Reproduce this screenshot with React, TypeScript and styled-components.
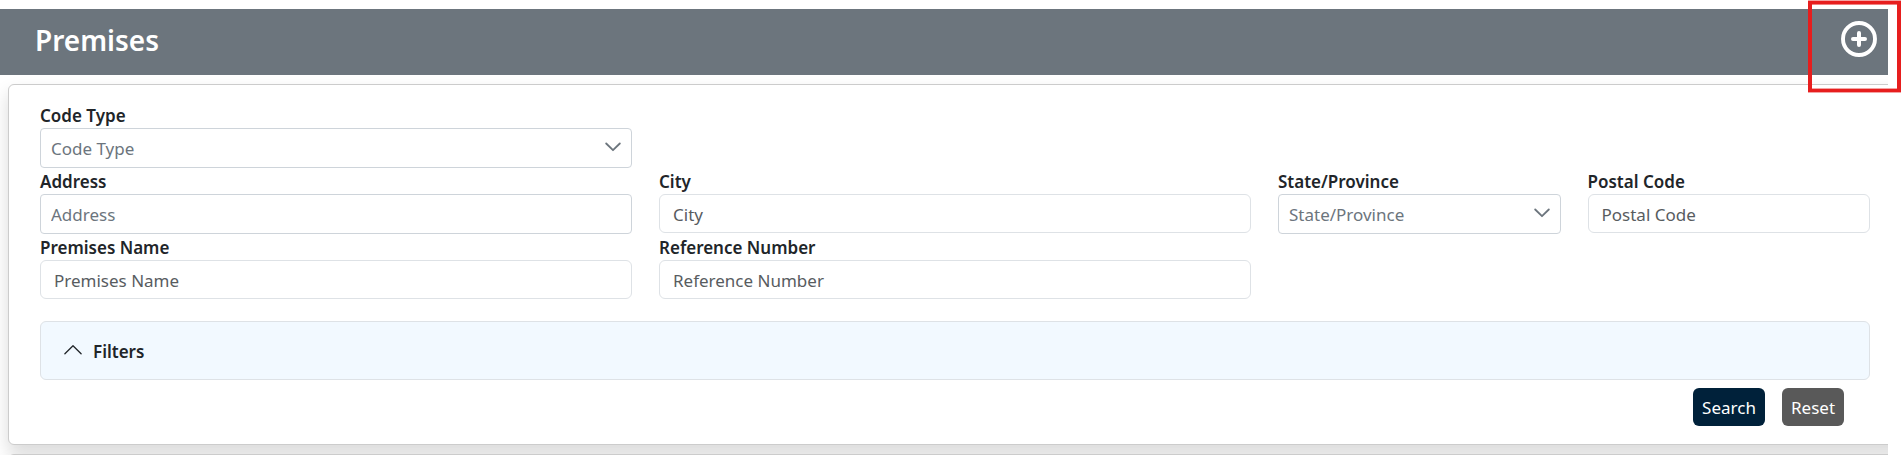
import React from "react";
import styled, { createGlobalStyle } from "styled-components";

const GlobalStyle = createGlobalStyle`
  *, *::before, *::after { box-sizing: border-box; }
  body {
    margin: 0;
    background: #fff;
    color: #212529;
    font-family: "Segoe UI", "Noto Sans", "Open Sans", sans-serif;
    font-size: 17px;
    line-height: 26px;
  }
`;

const Page = styled.div`
  position: relative;
`;

const Main = styled.main`
  margin-right: 13px;
  padding-top: 9px;
  overflow: hidden;
`;

const Header = styled.header`
  position: relative;
  z-index: 1;
  display: flex;
  align-items: flex-start;
  justify-content: space-between;
  height: 66px;
  padding: 12px 11px 0 35px;
  background: #6c757d;
  color: #fff;
`;

const Title = styled.h1`
  margin: 0;
  font-size: 28px;
  line-height: 38px;
  font-weight: 600;
`;

const IconButton = styled.button`
  display: flex;
  padding: 0;
  border: 0;
  background: none;
  color: inherit;
  cursor: pointer;
`;

const Highlight = styled.div`
  position: absolute;
  z-index: 2;
  top: 1px;
  right: 0;
  width: 93px;
  height: 91px;
  border: solid #e71e1e;
  border-width: 3px 4px;
  box-shadow: 0 -1px #f4a3a3, 0 1px #f4a3a3, inset 0 1px #f08080, inset 0 -1px #f4a3a3;
  pointer-events: none;
`;

const Card = styled.section`
  margin: 9px -24px 0 8px;
  padding: 17px 41px 18px 31px;
  border: 1px solid #ccc;
  border-radius: 6px;
  background: #fff;
  box-shadow: 0 9px 18px rgba(0, 0, 0, 0.15);
`;

const Results = styled(Card)`
  height: 40px;
  margin-bottom: -39px;
`;

const Fields = styled.div`
  display: grid;
  grid-template-columns: repeat(6, 1fr);
  column-gap: 27px;
`;

const Field = styled.div<{ $span: number; $newRow?: boolean }>`
  grid-column: ${(p) => (p.$newRow ? "1 / " : "")}span ${(p) => p.$span};
  display: flex;
  flex-direction: column;
`;

const Label = styled.label`
  padding-top: 2px;
  font-weight: 600;
  line-height: 24px;
`;

const TextInput = styled.input<{ $dense?: boolean }>`
  width: 100%;
  height: ${(p) => (p.$dense ? 40 : 39)}px;
  padding: 1px ${(p) => (p.$dense ? 10 : 13)}px 0;
  border: 1px solid ${(p) => (p.$dense ? "#ced4da" : "#dee2e6")};
  border-radius: ${(p) => (p.$dense ? 4 : 6)}px;
  background: #fff;
  color: #212529;
  font: inherit;
  &::placeholder {
    color: ${(p) => (p.$dense ? "#6c757d" : "#585c5f")};
    opacity: 1;
  }
`;

const SelectBox = styled.div`
  display: grid;
  align-items: center;
  & > * { grid-area: 1 / 1; }
  & > svg {
    justify-self: end;
    margin: 0 11px 2px 0;
    pointer-events: none;
  }
`;

const Select = styled.select`
  width: 100%;
  height: 40px;
  padding: 2px 40px 0 10px;
  border: 1px solid #ced4da;
  border-radius: 4px;
  appearance: none;
  background: #fff;
  color: #6c757d;
  font: inherit;
`;

const FiltersToggle = styled.button`
  display: flex;
  align-items: center;
  gap: 11px;
  width: 100%;
  height: 59px;
  margin-top: 22px;
  padding: 2px 23px 0;
  border: 1px solid #dee2e6;
  border-radius: 6px;
  background: #f2f9ff;
  color: #212529;
  font: inherit;
  font-weight: 600;
  cursor: pointer;
  & > svg { margin-bottom: 4px; }
`;

const Actions = styled.div`
  display: flex;
  justify-content: flex-end;
  gap: 17px;
  padding: 8px 26px 0 0;
`;

const Button = styled.button<{ $primary?: boolean }>`
  width: ${(p) => (p.$primary ? 72 : 62)}px;
  height: 38px;
  padding: 2px 0 0;
  border: 0;
  border-radius: 6px;
  background: ${(p) => (p.$primary ? "#00213a" : "#595959")};
  color: #fff;
  font: inherit;
  cursor: pointer;
`;

const PlusCircle = () => (
  <svg width="36" height="36" viewBox="0 0 36 36" fill="none" stroke="currentColor" strokeLinecap="round" aria-hidden="true">
    <circle cx="18" cy="18" r="16" strokeWidth="3.9" />
    <path d="M18 12v12M12 18h12" strokeWidth="4" />
  </svg>
);

const ChevronDown = () => (
  <svg width="16" height="10" viewBox="0 0 16 10" fill="none" stroke="#6c757d" strokeWidth="1.8" strokeLinecap="round" strokeLinejoin="round" aria-hidden="true">
    <path d="M1.2 1.5 8 8.2l6.8-6.7" />
  </svg>
);

const ChevronUp = () => (
  <svg width="18" height="10" viewBox="0 0 18 10" fill="none" stroke="currentColor" strokeWidth="1.3" strokeLinecap="round" strokeLinejoin="round" aria-hidden="true">
    <path d="M.9 8.8 9 .8l8.1 8" />
  </svg>
);

type FieldProps = { id: string; label: string; span: number; newRow?: boolean; dense?: boolean };

const TextField = ({ id, label, span, newRow, dense }: FieldProps) => (
  <Field $span={span} $newRow={newRow}>
    <Label htmlFor={id}>{label}</Label>
    <TextInput id={id} type="text" placeholder={label} $dense={dense} />
  </Field>
);

const SelectField = ({ id, label, span, newRow }: FieldProps) => (
  <Field $span={span} $newRow={newRow}>
    <Label htmlFor={id}>{label}</Label>
    <SelectBox>
      <Select id={id} defaultValue="">
        <option value="">{label}</option>
      </Select>
      <ChevronDown />
    </SelectBox>
  </Field>
);

export default function App() {
  return (
    <Page>
      <GlobalStyle />
      <Main>
        <Header>
          <Title>Premises</Title>
          <IconButton type="button" aria-label="Add premises">
            <PlusCircle />
          </IconButton>
        </Header>
        <Card as="form" onSubmit={(e: React.FormEvent) => e.preventDefault()}>
          <Fields>
            <SelectField id="codeType" label="Code Type" span={2} />
            <TextField id="address" label="Address" span={2} newRow dense />
            <TextField id="city" label="City" span={2} />
            <SelectField id="state" label="State/Province" span={1} />
            <TextField id="postalCode" label="Postal Code" span={1} />
            <TextField id="premisesName" label="Premises Name" span={2} newRow />
            <TextField id="referenceNumber" label="Reference Number" span={2} />
          </Fields>
          <FiltersToggle type="button" aria-expanded="true">
            <ChevronUp />
            Filters
          </FiltersToggle>
          <Actions>
            <Button type="submit" $primary>Search</Button>
            <Button type="reset">Reset</Button>
          </Actions>
        </Card>
        <Results aria-label="Results" />
      </Main>
      <Highlight />
    </Page>
  );
}
